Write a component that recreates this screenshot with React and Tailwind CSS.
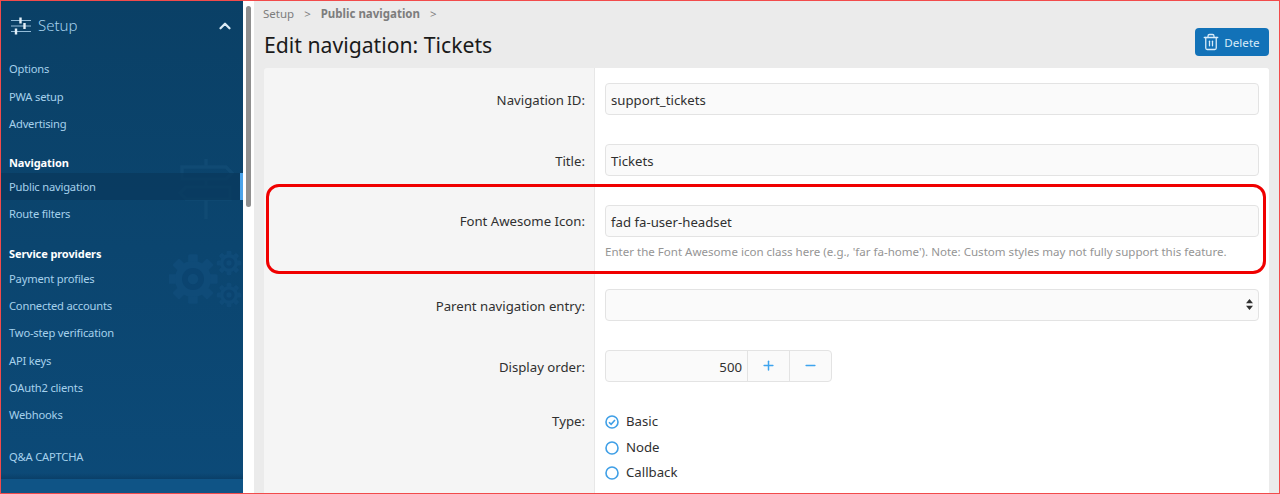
import { ChevronUp, Plus, Minus, Trash2 } from 'lucide-react'

function SideLink({ children, active, className = '' }) {
  return (
    <div
      className={`relative flex h-[27.3px] items-center pl-[8px] pt-[2px] text-[11.2px] tracking-[-0.2px] text-[#a6d1ec] ${active ? 'bg-[#093a5e]/80' : ''} ${className}`}
    >
      {children}
      {active && <div className="absolute right-0 top-0 h-full w-[3px] bg-[#4aa3ea]" />}
    </div>
  )
}

function SideHeading({ children, className = '' }) {
  return <div className={`h-[21px] pl-[8px] pt-[2px] text-[11px] leading-[18px] font-bold tracking-[-0.1px] text-white ${className}`}>{children}</div>
}

function SetupIcon() {
  return (
    <svg width="20" height="18" viewBox="0 0 20 18" fill="none" stroke="#93bcd8" strokeWidth="1.2">
      <path d="M0 3.5h20M0 9h20M0 14.5h20" />
      <path d="M9.5 0.5v6M13.5 6v6M5 11.5v6" stroke="#e4f0f8" strokeWidth="2.4" />
    </svg>
  )
}

function SignsWatermark() {
  return (
    <svg className="absolute left-[176px] top-[158px]" width="58" height="60" viewBox="0 0 58 60" fill="none" stroke="#104a73" strokeWidth="3.5">
      <path d="M29 0v8M29 20v8M29 40v20" />
      <path d="M5 8h44l6 6-6 6H5z" />
      <path d="M53 28H9l-6 6 6 6h44z" />
    </svg>
  )
}

function Gear({ x, y, r }) {
  const teeth = [0, 45, 90, 135]
  return (
    <g transform={`translate(${x} ${y})`}>
      {teeth.map((a) => (
        <rect key={a} x={-r * 0.22} y={-r * 1.12} width={r * 0.44} height={r * 2.24} rx="1.5" transform={`rotate(${a})`} fill="#0f4b78" />
      ))}
      <circle r={r * 0.82} fill="#0f4b78" />
      <circle r={r * 0.5} fill="#0b4470" />
      <circle r={r * 0.24} fill="#0f4b78" />
    </g>
  )
}

function GearsWatermark() {
  return (
    <svg className="absolute left-[168px] top-[250px]" width="74" height="60" viewBox="0 0 74 60">
      <Gear x={24} y={28} r={22} />
      <Gear x={60} y={12} r={11} />
      <Gear x={60} y={44} r={11} />
    </svg>
  )
}

function Sidebar() {
  return (
    <aside className="relative flex h-full w-[242px] shrink-0 flex-col bg-gradient-to-b from-[#0a4066] to-[#0c4a78]">
      <SignsWatermark />
      <GearsWatermark />
      <div className="relative flex h-[49px] shrink-0 items-center pl-[10px] pr-[9px]">
        <SetupIcon />
        <span className="ml-[7px] text-[15px] font-light text-[#a6d1ec]">Setup</span>
        <ChevronUp className="ml-auto text-[#dcebf5]" size={18} strokeWidth={3} />
      </div>
      <div className="relative mt-[5px]">
        <SideLink>Options</SideLink>
        <SideLink>PWA setup</SideLink>
        <SideLink>Advertising</SideLink>
      </div>
      <SideHeading className="relative mt-[15px]">Navigation</SideHeading>
      <SideLink active>Public navigation</SideLink>
      <SideLink>Route filters</SideLink>
      <SideHeading className="mt-[16px]">Service providers</SideHeading>
      <SideLink>Payment profiles</SideLink>
      <SideLink>Connected accounts</SideLink>
      <SideLink>Two-step verification</SideLink>
      <SideLink>API keys</SideLink>
      <SideLink>OAuth2 clients</SideLink>
      <SideLink>Webhooks</SideLink>
      <SideLink className="mt-[14px]">Q&amp;A CAPTCHA</SideLink>
      <div className="absolute bottom-[14px] left-0 h-[6px] w-full bg-gradient-to-b from-transparent to-[#0a3f68]" />
      <div className="absolute bottom-0 left-0 h-[14px] w-full bg-[#0f5486]" />
    </aside>
  )
}

function Row({ label, children, align = 'center', className = '' }) {
  return (
    <div className={`flex ${className}`}>
      <div className={`flex w-[330px] shrink-0 justify-end pr-[9px] pt-[4px] text-[13.2px] text-[#303030] ${align === 'center' ? 'items-center' : ''}`}>
        {label}
      </div>
      <div className="flex-1 border-l border-[#e7e7e7] bg-white px-[10px] py-[14.5px]">{children}</div>
    </div>
  )
}

function TextBox({ children, select }) {
  return (
    <div className="flex h-[32px] items-center rounded-[4px] border border-[#e3e3e3] bg-[#fafafa] px-[5px] pt-[4px] text-[13.2px] text-[#303030]">
      {children}
      {select && (
        <svg width="7" height="11" viewBox="0 0 7 11" className="ml-auto -translate-y-[2px]" fill="#303030">
          <path d="M3.5 0 7 4.2H0zM3.5 11 0 6.8h7z" />
        </svg>
      )}
    </div>
  )
}

function Radio({ label, checked }) {
  return (
    <div className="flex h-[25.7px] items-center text-[13.2px] text-[#303030]">
      <svg width="14" height="14" viewBox="0 0 14 14" fill="none" stroke="#3f9fe6" strokeWidth="1.6">
        <circle cx="7" cy="7" r="6" />
        {checked && <path d="M4 7.2 6.1 9.4 10 5" />}
      </svg>
      <span className="ml-[7px]">{label}</span>
    </div>
  )
}

export default function App() {
  return (
    <div
      className="relative flex h-screen overflow-hidden border border-[#f24b4b] bg-[#ebebeb]"
      style={{ fontFamily: '"Noto Sans", sans-serif' }}
    >
      <Sidebar />
      <div className="relative h-full w-[11px] shrink-0 bg-white">
        <div className="absolute left-[3px] top-[5px] h-[201px] w-[5px] rounded-full bg-[#8f8f8f]" />
      </div>
      <main className="min-w-0 flex-1 pl-[10px] pr-[10px]">
        <div className="-ml-[1px] flex h-[25px] items-center text-[11.5px] text-[#7d7d7d]">
          <span>Setup</span>
          <span className="mx-[10px]">&gt;</span>
          <span className="font-bold">Public navigation</span>
          <span className="mx-[10px]">&gt;</span>
        </div>
        <div className="flex h-[42px] items-start justify-between">
          <h1 className="pt-[2px] text-[21.2px] leading-[34px] text-[#1a1a1a]">Edit navigation: Tickets</h1>
          <button className="mt-[2px] flex h-[28px] w-[74px] items-center justify-center gap-[4px] rounded-[4px] bg-[#1272b8] pr-[2px] text-[11.6px] text-[#d9ecf9]">
            <Trash2 size={18} strokeWidth={1.7} />
            <span className="pt-[1px]">Delete</span>
          </button>
        </div>
        <section className="overflow-hidden rounded-[3px] bg-[#f5f5f5]">
          <Row label="Navigation ID:">
            <TextBox>support_tickets</TextBox>
          </Row>
          <Row label="Title:">
            <TextBox>Tickets</TextBox>
          </Row>
          <Row label="Font Awesome Icon:" align="top" className="[&>div:first-child]:pt-[22px]">
            <TextBox>fad fa-user-headset</TextBox>
            <p className="mt-[7px] text-[11.55px] leading-[16px] text-[#959595]">
              Enter the Font Awesome icon class here (e.g., 'far fa-home'). Note: Custom styles may not fully support this feature.
            </p>
          </Row>
          <Row label="Parent navigation entry:">
            <TextBox select />
          </Row>
          <Row label="Display order:">
            <div className="flex h-[32px] w-[227px] items-stretch overflow-hidden rounded-[4px] border border-[#e3e3e3] bg-[#fafafa] text-[13.2px] text-[#303030]">
              <div className="flex flex-1 items-center justify-end pr-[5px] pt-[4px]">500</div>
              <div className="flex w-[42px] items-center justify-center border-l border-[#e3e3e3] text-[#3ea4ee]">
                <Plus size={15} strokeWidth={2.4} />
              </div>
              <div className="flex w-[42px] items-center justify-center border-l border-[#e3e3e3] text-[#3ea4ee]">
                <Minus size={15} strokeWidth={2.4} />
              </div>
            </div>
          </Row>
          <Row label="Type:" align="top" className="[&>div:first-child]:pt-[16px] [&>div:last-child]:pt-[13px]">
            <Radio label="Basic" checked />
            <Radio label="Node" />
            <Radio label="Callback" />
          </Row>
        </section>
      </main>
      <div className="pointer-events-none absolute left-[265px] top-[183px] h-[90px] w-[1000px] rounded-[13px] border-[3px] border-[#f00000]" />
    </div>
  )
}
